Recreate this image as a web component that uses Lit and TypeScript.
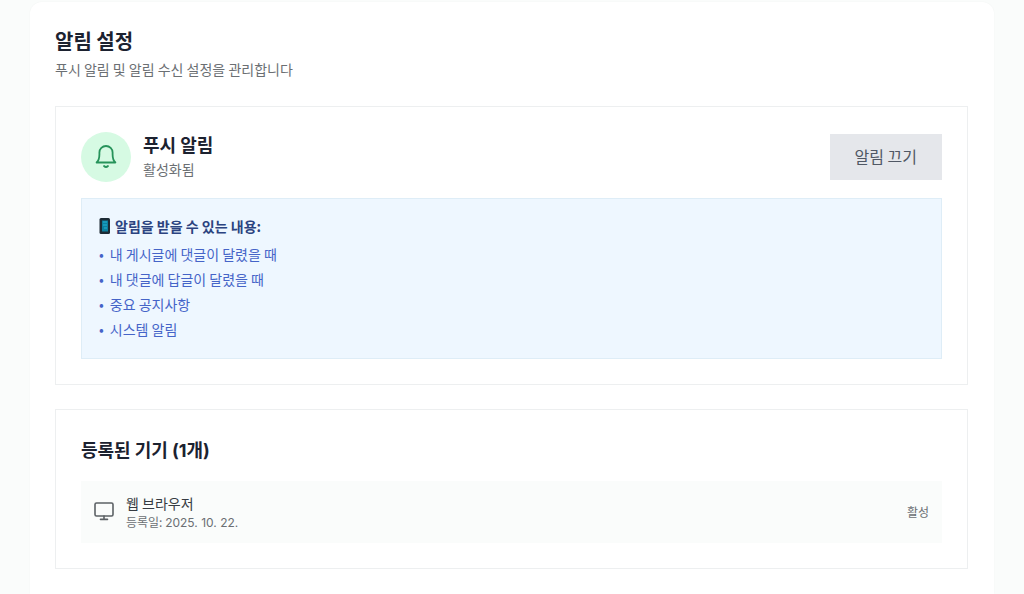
import { LitElement, html, css } from "lit";
import { customElement, state } from "lit/decorators.js";

interface Device {
  name: string;
  registered: string;
  status: string;
}

@customElement("app-root")
export class AppRoot extends LitElement {
  static styles = css`
    :host {
      display: block;
      box-sizing: border-box;
      min-height: 100vh;
      padding: 2px 30px 0;
      background: #fafcfb;
      color: #1c2230;
      font-family: "Noto Sans CJK KR", sans-serif;
      font-size: 14px;
      line-height: 20px;
    }
    *,
    *::before {
      box-sizing: border-box;
    }
    h1,
    h2,
    h3,
    p,
    ul {
      margin: 0;
      padding: 0;
    }
    .panel {
      min-height: calc(100vh - 2px);
      padding: 25px 26px 24px 25px;
      background: #fff;
      border-radius: 12px 12px 0 0;
      box-shadow: 0 0 2px rgba(20, 40, 30, 0.04);
    }
    .title {
      font-size: 20px;
      line-height: 28px;
      font-weight: 700;
    }
    .subtitle {
      margin-top: 4px;
      line-height: 20px;
      color: #6b6f73;
    }
    .cards {
      display: flex;
      flex-direction: column;
      gap: 24px;
      margin-top: 27px;
    }
    .card {
      padding: 25px;
      border: 1px solid #edeff0;
    }
    .head {
      display: flex;
      align-items: center;
      gap: 12px;
    }
    .badge {
      display: grid;
      place-items: center;
      width: 50px;
      height: 50px;
      border-radius: 50%;
      background: #d6fae3;
      color: #26935a;
    }
    .grow {
      flex: 1;
      min-width: 0;
    }
    .heading {
      font-size: 18px;
      line-height: 28px;
      font-weight: 700;
    }
    .state {
      line-height: 26px;
      color: #6b6f73;
    }
    .head .heading {
      line-height: 24px;
    }
    .toggle {
      height: 46px;
      padding: 0 25px 2px;
      border: 0;
      border-radius: 0;
      background: #e5e7eb;
      color: #505864;
      font: inherit;
      font-size: 16px;
      line-height: 24px;
      cursor: pointer;
    }
    .info {
      margin-top: 16px;
      padding: 16px 17px;
      border: 1px solid #deedf7;
      background: #eef7ff;
      color: #4564c8;
    }
    .info-title {
      display: flex;
      align-items: center;
      gap: 4px;
      margin-bottom: 5px;
      line-height: 22px;
      font-size: 14px;
      font-weight: 700;
      color: #2b4380;
    }
    .info-list {
      list-style: none;
    }
    .info-list li {
      display: flex;
      gap: 6px;
      line-height: 25px;
    }
    .device {
      display: flex;
      align-items: center;
      gap: 12px;
      margin-top: 18px;
      padding: 12px 13px;
      background: #fafcfb;
    }
    .device-icon {
      color: #5c6165;
    }
    .device-name {
      line-height: 20px;
      color: #363b42;
    }
    .device-date,
    .device-status {
      font-size: 12px;
      line-height: 18px;
      color: #6b6f73;
    }
    .num {
      font-family: "Inter", sans-serif;
      line-height: 1;
    }
    svg {
      display: block;
      flex: none;
    }
  `;

  @state() private enabled = true;

  private topics = [
    "내 게시글에 댓글이 달렸을 때",
    "내 댓글에 답글이 달렸을 때",
    "중요 공지사항",
    "시스템 알림",
  ];

  private devices: Device[] = [
    { name: "웹 브라우저", registered: "2025. 10. 22.", status: "활성" },
  ];

  private toggle() {
    this.enabled = !this.enabled;
  }

  render() {
    return html`
      <main class="panel">
        <h1 class="title">알림 설정</h1>
        <p class="subtitle">푸시 알림 및 알림 수신 설정을 관리합니다</p>
        <div class="cards">
          <section class="card">
            <div class="head">
              <span class="badge">
                <svg width="24" height="26" viewBox="0 0 24 26" fill="none" stroke="currentColor" stroke-width="1.8" stroke-linecap="round" stroke-linejoin="round" aria-hidden="true">
                  <path d="M2.600 18.500C4.600 16.600 5.400 14 5.400 10.400V8.600a6.600 6.600 0 0 1 13.200 0v1.800c0 3.600.8 6.200 2.800 8.100Z" />
                  <path d="M10 22a2.900 2.900 0 0 0 4 0" />
                </svg>
              </span>
              <div class="grow">
                <h2 class="heading">푸시 알림</h2>
                <p class="state">${this.enabled ? "활성화됨" : "비활성화됨"}</p>
              </div>
              <button class="toggle" type="button" @click=${this.toggle}>
                ${this.enabled ? "알림 끄기" : "알림 켜기"}
              </button>
            </div>
            <div class="info">
              <h3 class="info-title">
                <svg width="12" height="18" viewBox="0 0 12 18" aria-hidden="true">
                  <rect x="0.500" y="1" width="10.500" height="16" rx="1.500" fill="#1d2b35" />
                  <rect x="3" y="3.500" width="6" height="11" fill="#0b7f9e" />
                  <path d="M4 5h4M4 8h4M5 11h3" stroke="#1ca3c2" stroke-width="1.500" />
                </svg>
                알림을 받을 수 있는 내용:
              </h3>
              <ul class="info-list">
                ${this.topics.map(
                  (topic) => html`<li><span>•</span><span>${topic}</span></li>`,
                )}
              </ul>
            </div>
          </section>
          <section class="card">
            <h2 class="heading">등록된 기기 <span class="num">(${this.devices.length}</span>개<span class="num">)</span></h2>
            ${this.devices.map(
              (device) => html`
                <div class="device">
                  <svg class="device-icon" width="20" height="20" viewBox="0 0 20 20" fill="none" stroke="currentColor" stroke-width="1.600" stroke-linecap="round" stroke-linejoin="round" aria-hidden="true">
                    <rect x="1" y="1" width="18" height="13" rx="1.500" />
                    <path d="M10 14v3.200M6.500 17.400h7" />
                  </svg>
                  <div class="grow">
                    <p class="device-name">${device.name}</p>
                    <p class="device-date">등록일: <span class="num">${device.registered}</span></p>
                  </div>
                  <span class="device-status">${device.status}</span>
                </div>
              `,
            )}
          </section>
        </div>
      </main>
    `;
  }
}
